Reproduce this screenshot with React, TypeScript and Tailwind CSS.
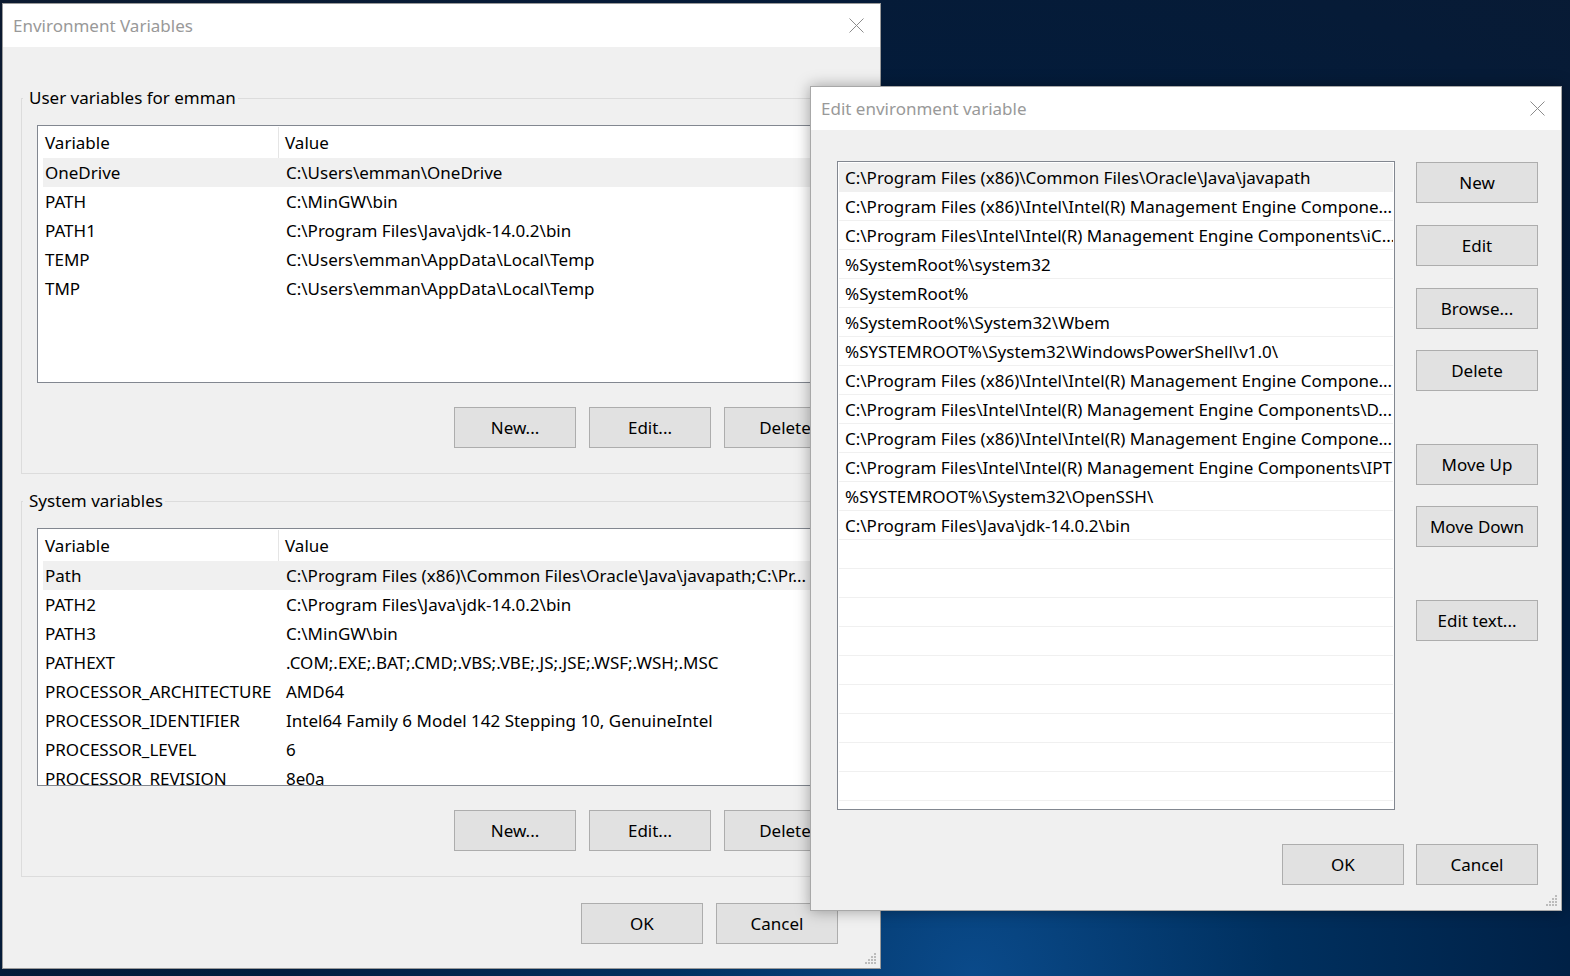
const userVars = [
  ['OneDrive', 'C:\\Users\\emman\\OneDrive'],
  ['PATH', 'C:\\MinGW\\bin'],
  ['PATH1', 'C:\\Program Files\\Java\\jdk-14.0.2\\bin'],
  ['TEMP', 'C:\\Users\\emman\\AppData\\Local\\Temp'],
  ['TMP', 'C:\\Users\\emman\\AppData\\Local\\Temp'],
];

const systemVars = [
  ['Path', 'C:\\Program Files (x86)\\Common Files\\Oracle\\Java\\javapath;C:\\Pr...'],
  ['PATH2', 'C:\\Program Files\\Java\\jdk-14.0.2\\bin'],
  ['PATH3', 'C:\\MinGW\\bin'],
  ['PATHEXT', '.COM;.EXE;.BAT;.CMD;.VBS;.VBE;.JS;.JSE;.WSF;.WSH;.MSC'],
  ['PROCESSOR_ARCHITECTURE', 'AMD64'],
  ['PROCESSOR_IDENTIFIER', 'Intel64 Family 6 Model 142 Stepping 10, GenuineIntel'],
  ['PROCESSOR_LEVEL', '6'],
  ['PROCESSOR_REVISION', '8e0a'],
];

const pathEntries = [
  'C:\\Program Files (x86)\\Common Files\\Oracle\\Java\\javapath',
  'C:\\Program Files (x86)\\Intel\\Intel(R) Management Engine Compone...',
  'C:\\Program Files\\Intel\\Intel(R) Management Engine Components\\iC...',
  '%SystemRoot%\\system32',
  '%SystemRoot%',
  '%SystemRoot%\\System32\\Wbem',
  '%SYSTEMROOT%\\System32\\WindowsPowerShell\\v1.0\\',
  'C:\\Program Files (x86)\\Intel\\Intel(R) Management Engine Compone...',
  'C:\\Program Files\\Intel\\Intel(R) Management Engine Components\\D...',
  'C:\\Program Files (x86)\\Intel\\Intel(R) Management Engine Compone...',
  'C:\\Program Files\\Intel\\Intel(R) Management Engine Components\\IPT',
  '%SYSTEMROOT%\\System32\\OpenSSH\\',
  'C:\\Program Files\\Java\\jdk-14.0.2\\bin',
];

function CloseIcon() {
  return (
    <svg width="15" height="15" viewBox="0 0 15 15" className="shrink-0">
      <path d="M0.5 0.5 L14.5 14.5 M14.5 0.5 L0.5 14.5" stroke="#8c8c8c" strokeWidth="1" fill="none" />
    </svg>
  );
}

// little dotted resize handle in the bottom-right corner
function Grip() {
  return (
    <svg width="12" height="12" viewBox="0 0 12 12" className="absolute bottom-[3px] right-[3px]">
      {[
        [9, 0],
        [6, 3],
        [9, 3],
        [3, 6],
        [6, 6],
        [9, 6],
        [0, 9],
        [3, 9],
        [6, 9],
        [9, 9],
      ].map(([x, y]) => (
        <rect key={`${x}-${y}`} x={x} y={y} width="2" height="2" fill="#bcbcbc" />
      ))}
    </svg>
  );
}

function Btn({ label, className = '' }: { label: string; className?: string }) {
  return (
    <button className={`h-[41px] w-[122px] shrink-0 border border-[#adadad] bg-[#e1e1e1] text-[17px] text-black ${className}`}>
      {label}
    </button>
  );
}

function TitleBar({ title }: { title: string }) {
  return (
    <div className="flex h-[43px] shrink-0 items-center justify-between bg-white pl-[10px] pr-[16px]">
      <span className="text-[17px] text-[#999999]">{title}</span>
      <CloseIcon />
    </div>
  );
}

function VarList({ rows }: { rows: string[][] }) {
  return (
    <div className="h-[258px] overflow-hidden border border-[#828790] bg-white pl-[5px]">
      <div className="flex h-[32px] items-stretch pt-[1px]">
        <div className="flex w-[236px] shrink-0 items-center border-r border-[#e5e5e5] pl-[2px]">Variable</div>
        <div className="flex items-center pl-[6px]">Value</div>
      </div>
      {rows.map(([k, v], i) => (
        <div key={k} className={`flex h-[29px] items-center whitespace-nowrap pt-[1px] ${i === 0 ? 'bg-[#f0f0f0]' : ''}`}>
          <div className="w-[236px] shrink-0 pl-[2px]">{k}</div>
          <div className="pl-[7px]">{v}</div>
        </div>
      ))}
    </div>
  );
}

function Group({ label, rows, className = '' }: { label: string; rows: string[][]; className?: string }) {
  return (
    <fieldset className={`mx-[18px] border border-[#dcdcdc] px-[15px] pb-[25px] pt-[15px] ${className}`}>
      <legend className="-ml-[14px] pl-[6px] pr-[2px] leading-[24px]">{label}</legend>
      <VarList rows={rows} />
      <div className="mt-[24px] flex justify-end gap-[13px]">
        <Btn label="New..." />
        <Btn label="Edit..." />
        <Btn label="Delete" />
      </div>
    </fieldset>
  );
}

export default function App() {
  const emptyRows = 22 - pathEntries.length;
  return (
    <div className="relative h-[976px] w-[1570px] overflow-hidden bg-[radial-gradient(circle_at_62%_100%,#0a4a8a_0%,#00305f_22%,#001c3e_50%,#0c1a30_100%)] font-['Noto_Sans',sans-serif] text-[17px] text-black">
      {/* Environment Variables window */}
      <div className="absolute left-[2px] top-[3px] flex h-[966px] w-[879px] flex-col border border-[#9a9a9a] bg-[#f0f0f0]">
        <TitleBar title="Environment Variables" />
        <Group label="User variables for emman" rows={userVars} className="mt-[39px]" />
        <Group label="System variables" rows={systemVars} className="mt-[15px]" />
        <div className="mt-[26px] flex justify-end gap-[13px] pr-[42px]">
          <Btn label="OK" />
          <Btn label="Cancel" />
        </div>
        <Grip />
      </div>

      {/* Edit environment variable window */}
      <div className="absolute left-[810px] top-[86px] flex h-[825px] w-[752px] flex-col border border-[#a8a8a8] bg-[#f0f0f0] shadow-[0_0_14px_rgba(0,0,0,0.35)]">
        <TitleBar title="Edit environment variable" />
        <div className="mt-[31px] flex pl-[26px]">
          <div className="h-[649px] w-[558px] shrink-0 overflow-hidden border border-[#828790] bg-white px-[1px] pt-[1px]">
            {pathEntries.map((p, i) => (
              <div
                key={i}
                className={`flex h-[29px] items-center overflow-hidden whitespace-nowrap border-b border-[#f0f0f0] pl-[6px] pt-[1px] ${i === 0 ? 'bg-[#f0f0f0]' : ''}`}
              >
                {p}
              </div>
            ))}
            {Array.from({ length: emptyRows }).map((_, i) => (
              <div key={`e${i}`} className="h-[29px] border-b border-[#f0f0f0]" />
            ))}
          </div>
          <div className="ml-[21px] mt-[1px] flex flex-col">
            <Btn label="New" />
            <Btn label="Edit" className="mt-[22px]" />
            <Btn label="Browse..." className="mt-[22px]" />
            <Btn label="Delete" className="mt-[21px]" />
            <Btn label="Move Up" className="mt-[53px]" />
            <Btn label="Move Down" className="mt-[21px]" />
            <Btn label="Edit text..." className="mt-[53px]" />
          </div>
        </div>
        <div className="mt-[34px] flex justify-end gap-[12px] pr-[23px]">
          <Btn label="OK" />
          <Btn label="Cancel" />
        </div>
        <Grip />
      </div>
    </div>
  );
}
